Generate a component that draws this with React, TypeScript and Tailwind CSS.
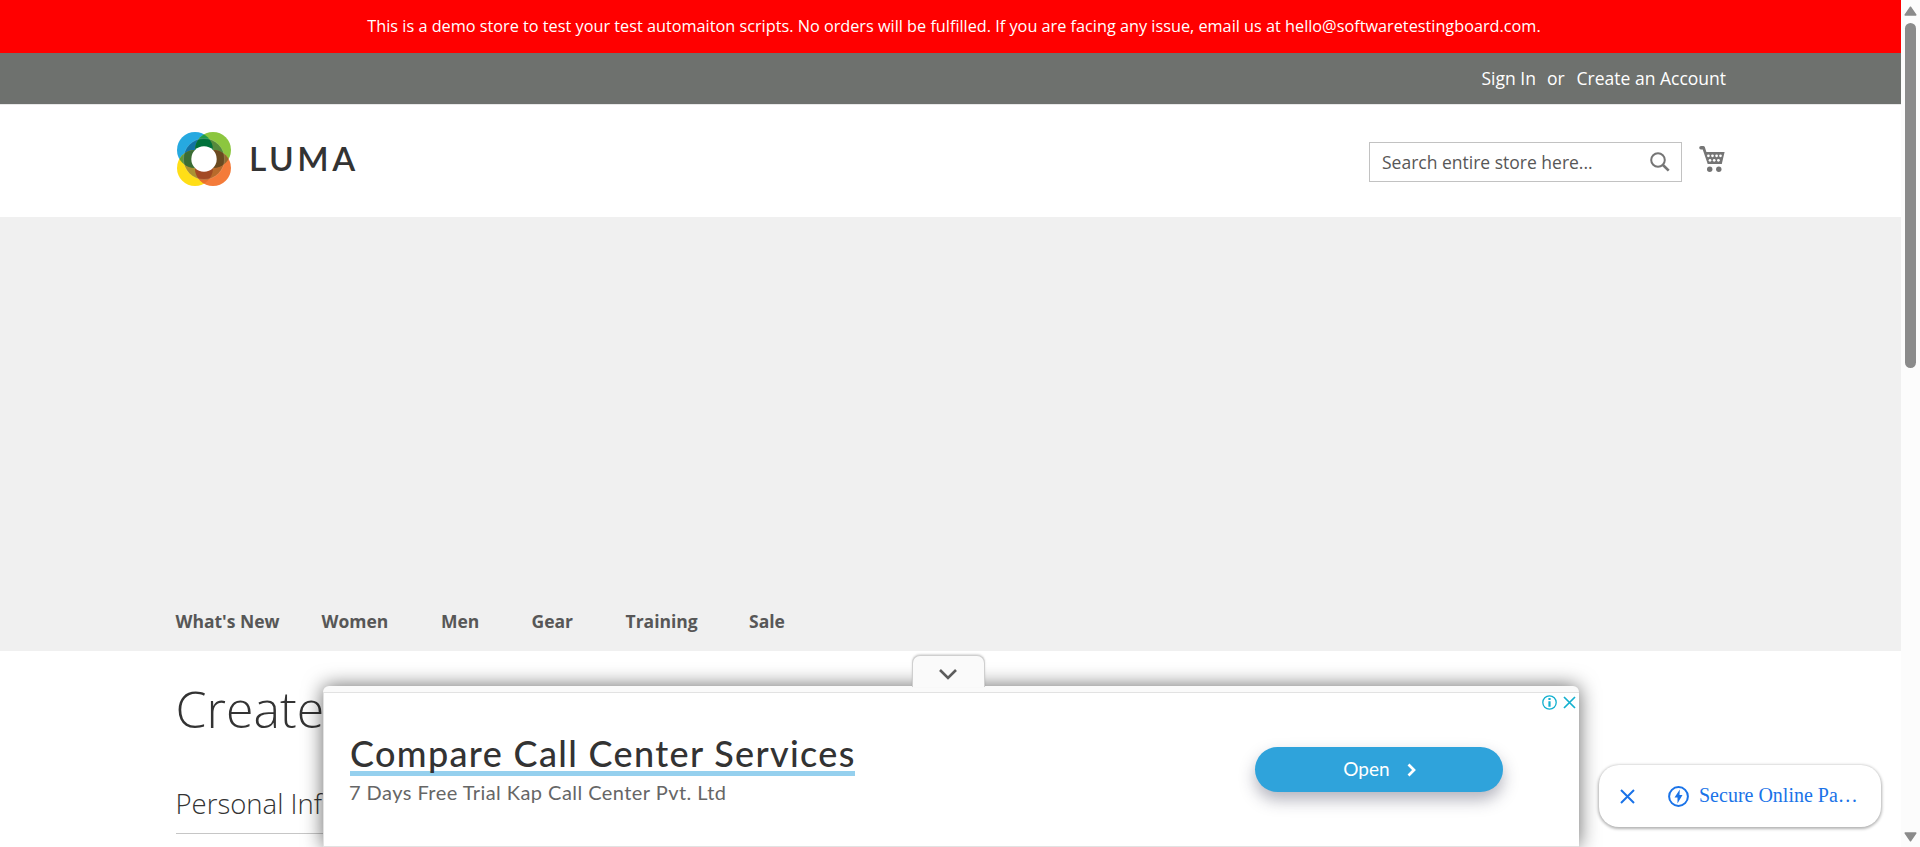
import React from "react";

const navItems = [
  { label: "What's New", width: "w-[146px]" },
  { label: "Women", width: "w-[119.5px]" },
  { label: "Men", width: "w-[90.5px]" },
  { label: "Gear", width: "w-[94px]" },
  { label: "Training", width: "w-[123.5px]" },
  { label: "Sale", width: "w-[80px]" },
];

function LumaMark() {
  return (
    <svg width="54" height="54" viewBox="0 0 54 54">
      <defs>
        <clipPath id="tl"><circle cx="18" cy="18" r="18" /></clipPath>
        <clipPath id="tr"><circle cx="36" cy="18" r="18" /></clipPath>
        <clipPath id="bl"><circle cx="18" cy="36" r="18" /></clipPath>
        <clipPath id="br"><circle cx="36" cy="36" r="18" /></clipPath>
        <clipPath id="ring"><circle cx="27" cy="27" r="20.5" /></clipPath>
      </defs>
      <circle cx="18" cy="18" r="18" fill="#26a9e0" />
      <circle cx="36" cy="18" r="18" fill="#8cc63f" />
      <circle cx="18" cy="36" r="18" fill="#ffde17" />
      <circle cx="36" cy="36" r="18" fill="#f47b3a" />
      <g clipPath="url(#tl)"><circle cx="36" cy="18" r="18" fill="#1f9a4c" /></g>
      <g clipPath="url(#tl)"><circle cx="18" cy="36" r="18" fill="#5f9a3a" /></g>
      <g clipPath="url(#br)"><circle cx="36" cy="18" r="18" fill="#93692f" /></g>
      <g clipPath="url(#br)"><circle cx="18" cy="36" r="18" fill="#e8702a" /></g>
      <g clipPath="url(#tl)"><circle cx="27" cy="27" r="20.5" fill="#1272a3" /></g>
      <g clipPath="url(#tr)"><circle cx="27" cy="27" r="20.5" fill="#55893c" /></g>
      <g clipPath="url(#bl)"><circle cx="27" cy="27" r="20.5" fill="#a99133" /></g>
      <g clipPath="url(#br)"><circle cx="27" cy="27" r="20.5" fill="#b86a2b" /></g>
      <g clipPath="url(#ring)">
        <g clipPath="url(#tl)"><circle cx="36" cy="18" r="18" fill="#00713a" /></g>
        <g clipPath="url(#tl)"><circle cx="18" cy="36" r="18" fill="#3a6d35" /></g>
        <g clipPath="url(#br)"><circle cx="36" cy="18" r="18" fill="#6a4a20" /></g>
        <g clipPath="url(#br)"><circle cx="18" cy="36" r="18" fill="#a34a24" /></g>
      </g>
      <circle cx="27" cy="27" r="20.5" fill="none" stroke="#fff" strokeOpacity="0.25" strokeWidth="0.6" />
      <circle cx="27" cy="27" r="12.7" fill="#fff" />
    </svg>
  );
}

function CartIcon() {
  return (
    <svg width="26" height="26" viewBox="0 0 26 26" fill="#757575">
      <path d="M2 0h2.2c.8 0 1.3.4 1.6 1.1L7.400 6H25.600l-2.800 12H8.700L3.700 3.600H2A1.800 1.800 0 0 1 2 0Z" />
      <circle cx="10.700" cy="23.200" r="2.700" />
      <circle cx="19.800" cy="23.200" r="2.700" />
      <g fill="#fff">
        <circle cx="9.400" cy="9.800" r="1.350" />
        <circle cx="13.500" cy="9.800" r="1.350" />
        <circle cx="17.600" cy="9.800" r="1.350" />
        <circle cx="21.500" cy="9.800" r="1.350" />
        <circle cx="11" cy="14.300" r="1.350" />
        <circle cx="15.200" cy="14.300" r="1.350" />
        <circle cx="19.400" cy="14.300" r="1.350" />
      </g>
    </svg>
  );
}

function Scrollbar() {
  return (
    <div className="flex h-full w-[19px] shrink-0 flex-col items-center bg-[#fcfcfc] pt-[6px] pb-[5px]">
      <svg width="13" height="10" viewBox="0 0 13 10"><path d="M6.500 1.200 11.800 9H1.200Z" fill="#8b8b8b" stroke="#8b8b8b" strokeWidth="1.500" strokeLinejoin="round" /></svg>
      <div className="mt-[7px] h-[345px] w-[11px] rounded-full bg-[#8b8b8b]" />
      <svg className="mt-auto" width="13" height="10" viewBox="0 0 13 10"><path d="M6.500 8.800 11.800 1H1.200Z" fill="#8b8b8b" stroke="#8b8b8b" strokeWidth="1.500" strokeLinejoin="round" /></svg>
    </div>
  );
}

function BottomAd() {
  return (
    <div className="absolute top-[655px] left-[323px] flex h-[192px] w-[1256px] flex-col">
      <div className="relative z-10 ml-[589px] flex h-[32px] w-[73px] items-center justify-center rounded-t-[8px] border-x border-t border-[#cfcfcf] bg-[#fafafa] shadow-[0_-1px_2px_rgba(0,0,0,0.15)]">
        <svg width="20" height="14" viewBox="0 0 20 14" className="mt-[6px] mr-px"><path d="m2 2 8 8 8-8" fill="none" stroke="#5c5c5c" strokeWidth="2.600" /></svg>
      </div>
      <div className="-mt-px flex h-[161px] flex-col rounded-t-[6px] bg-[#fafafa] shadow-[0_0_20px_rgba(0,0,0,0.6)]">
        <div className="mt-[6px] flex h-[155px] justify-between border-y border-l border-[#e2e2e2] bg-white">
          <div className="flex flex-col items-start pt-[40px] pl-[26px] font-['Lato']">
            <div className="h-[43px] w-[505px] border-b-[5px] border-[#95d0ee] text-[36px] leading-[41px] font-medium tracking-[1.350px] whitespace-nowrap text-[#333]">Compare Call Center Services</div>
            <div className="mt-[3px] -ml-px text-[20px] leading-[26px] tracking-[0.450px] whitespace-nowrap text-[#666]">7 Days Free Trial Kap Call Center Pvt. Ltd</div>
          </div>
          <div className="flex">
            <div className="mt-[54px] flex h-[45px] w-[248px] items-center justify-center rounded-full bg-[#2fa3db] pl-[2px] font-['Lato'] text-[19px] text-white shadow-[0_8px_16px_rgba(40,40,70,0.35)]">
              <span>Open</span>
              <svg className="ml-[17px]" width="10" height="14" viewBox="0 0 10 14"><path d="m1.500 1.500 5.500 5.500-5.500 5.500" fill="none" stroke="#fff" strokeWidth="2.700" /></svg>
            </div>
            <div className="mt-[2px] ml-[39px] flex gap-[6px] pr-[3px]">
              <svg width="15" height="15" viewBox="0 0 15 15" fill="none" stroke="#12b0cf"><circle cx="7.500" cy="7.500" r="6.700" strokeWidth="1.300" /><path d="M7.500 6.200v5.500M7.500 3v2" strokeWidth="2.200" /></svg>
              <svg className="mt-px" width="13" height="13" viewBox="0 0 13 13"><path d="m1 1 11 11M12 1 1 12" stroke="#12b0cf" strokeWidth="1.700" /></svg>
            </div>
          </div>
        </div>
      </div>
    </div>
  );
}

function PromoChip() {
  return (
    <div className="absolute top-[765px] left-[1599px] flex h-[62px] w-[282px] items-center rounded-[20px] bg-white pl-[21px] shadow-[0_1px_3px_1px_rgba(0,0,0,0.3)]">
      <svg width="15" height="15" viewBox="0 0 15 15"><path d="m1 1 13 13M14 1 1 14" stroke="#1a73e8" strokeWidth="2" /></svg>
      <svg className="ml-[33px]" width="21" height="21" viewBox="0 0 21 21"><circle cx="10.500" cy="10.500" r="9.400" fill="none" stroke="#1a73e8" strokeWidth="2" /><path d="M11.800 3.500 6.500 11.500h3v6l5-8.500h-3Z" fill="#1a73e8" /></svg>
      <span className="mb-[2px] ml-[10px] font-['Liberation_Serif'] text-[20px] whitespace-nowrap text-[#1a73e8]">Secure Online Pa…</span>
    </div>
  );
}

export default function App() {
  return (
    <div className="relative flex h-[847px] w-[1920px] overflow-hidden bg-white font-['Open_Sans',sans-serif]">
      <div className="flex w-[1901px] shrink-0 flex-col">
        <div className="flex h-[53px] items-center justify-center bg-[#ff0000] pl-[7px] text-[16.250px] text-white">
          <span className="whitespace-nowrap">This is a demo store to test your test automaiton scripts. No orders will be fulfilled. If you are facing any issue, email us at hello@softwaretestingboard.com.</span>
        </div>
        <div className="flex h-[52px] justify-end border-b border-[#e8e8e8] bg-[#6e716e] pr-[175px] text-[17.500px] leading-[50px] text-white">
          <span>Sign In</span>
          <span className="ml-[11px]">or</span>
          <span className="ml-[12px]">Create an Account</span>
        </div>
        <header className="flex h-[112px] items-start pr-[176px] pl-[177px]">
          <div className="mt-[27px] flex items-center">
            <LumaMark />
            <span className="ml-[18px] font-['Lato'] text-[33.500px] leading-[52px] font-semibold tracking-[3.500px] text-[#333] h-[54px]">LUMA</span>
          </div>
          <div className="mt-[37px] ml-auto flex h-[40px] w-[313px] items-center justify-between border border-[#c2c2c2] pr-[11px] pl-[12px] text-[17.500px] text-[#575757]">
            <span>Search entire store here...</span>
            <svg width="20" height="20" viewBox="0 0 20 20" fill="none" stroke="#757575"><circle cx="8" cy="8" r="6.800" strokeWidth="2" /><path d="m12.500 12.500 6.200 6.200" strokeWidth="2.600" /></svg>
          </div>
          <div className="mt-[41px] ml-[17px]"><CartIcon /></div>
        </header>
        <div className="flex h-[434px] items-end bg-[#f0f0f0] pl-[175.500px]">
          <nav className="flex pb-[14px] text-[17.500px] leading-[32px] font-bold text-[#575757]">
            {navItems.map((item) => (
              <span key={item.label} className={`${item.width} shrink-0 whitespace-nowrap`}>{item.label}</span>
            ))}
          </nav>
        </div>
        <main className="w-[950px] pl-[175.500px]">
          <h1 className="mt-[31px] text-[50px] leading-[55px] font-light text-[#333]">Create</h1>
          <h2 className="mt-[50px] h-[47px] border-b border-[#c6c6c6] text-[27.500px] leading-[33px] font-light text-[#333]">Personal Inf</h2>
        </main>
      </div>
      <Scrollbar />
      <BottomAd />
      <PromoChip />
    </div>
  );
}
